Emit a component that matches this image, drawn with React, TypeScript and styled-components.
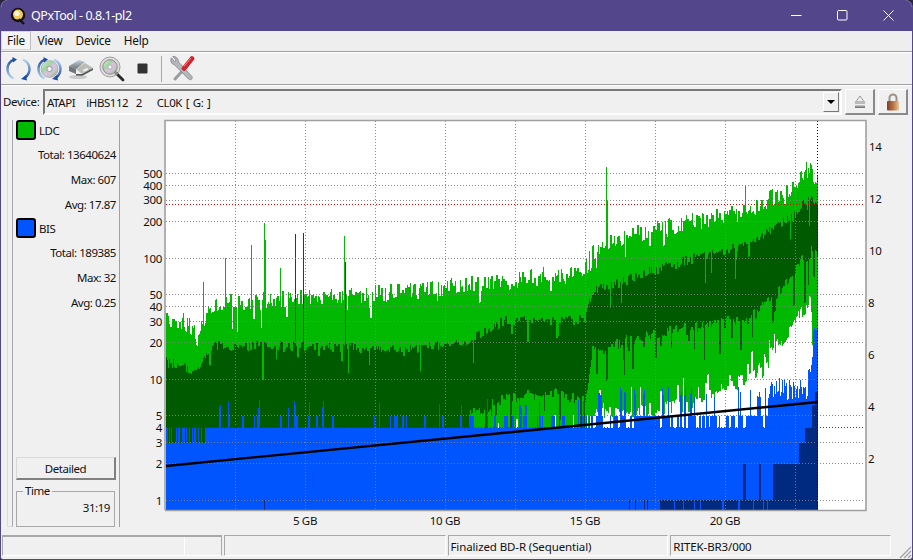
import React from "react";
import styled, { createGlobalStyle } from "styled-components";

const Global = createGlobalStyle`
  html, body { margin: 0; padding: 0; background: #2a2540; }
  #root { width: 913px; height: 560px; }
  * { box-sizing: border-box; }
`;
const Win = styled.div`
  width: 913px; height: 560px; overflow: hidden; display: flex; flex-direction: column;
  background: #f0f0f0; border-radius: 8px 8px 3px 3px; border: 1px solid #54468a; border-top: 0;
  font-family: "Noto Sans", "Open Sans", sans-serif; font-size: 11.5px; letter-spacing: -0.45px; color: #111;
`;
const TitleBar = styled.div`
  height: 31px; flex: none; background: #54468a; color: #fff; display: flex; align-items: center;
  margin: 0 -1px; padding: 0 2px 0 10px; font-size: 12.5px;
`;
const TitleText = styled.span` margin-left: 5px; flex: 1; `;
const Caption = styled.div` width: 46px; height: 31px; display: flex; align-items: center; justify-content: center; `;
const MenuBar = styled.div`
  height: 21px; flex: none; display: flex; background: #eeeeee; align-items: flex-start;
  border-bottom: 1px solid #a0a0a0;
`;
const MenuItem = styled.div<{ $on?: boolean }>`
  height: 19px; padding: 0 6.5px; line-height: 19px; font-size: 11.8px; letter-spacing: -0.2px;
  ${p => p.$on ? "border: 1px solid #d8d8d8; border-right-color:#bdbdbd; line-height:17px; padding:0 5px; background:#f4f4f4;" : ""}
`;
const ToolBar = styled.div`
  height: 33px; flex: none; display: flex; align-items: center; padding-left: 2px; border-top: 1px solid #fff;
  border-bottom: 1px solid #a0a0a0; background: #f0f0f0;
`;
const ToolButton = styled.div` width: 31px; height: 30px; display: flex; align-items: center; justify-content: center; `;
const ToolSep = styled.div` width: 1px; height: 26px; background: #a8a8a8; margin: 0 4px 0 3px; `;
const DeviceRow = styled.div`
  height: 33px; flex: none; display: flex; align-items: flex-start; padding: 3px 4px 0 2px; border-top: 1px solid #fff;
`;
const DeviceLabel = styled.div` width: 40px; height: 26px; line-height: 26px; font-size: 11.5px; letter-spacing: -0.3px; `;
const Combo = styled.div`
  flex: 1; height: 26px; display: flex; align-items: center; justify-content: space-between; padding: 0 1px 0 2px;
  border: 2px solid #fff; border-top-color: #7a7a7a; border-left-color: #7a7a7a; background: #f0f0f0;
`;
const ComboText = styled.span` white-space: pre; font-size: 11.5px; word-spacing: 1.2px; `;
const ComboArrow = styled.div`
  width: 16px; height: 20px; border: 1px solid #fff; border-right-color: #777; border-bottom-color: #777;
  display: flex; align-items: center; justify-content: center;
  &::after { content: ""; border: 4px solid transparent; border-top: 4px solid #000; border-bottom: 0; }
`;
const SquareBtn = styled.div`
  width: 30px; height: 26px; margin-left: 3px; border: 1px solid #fff; border-right: 2px solid #8a8a8a; border-bottom: 2px solid #8a8a8a;
  display: flex; align-items: center; justify-content: center; &:first-of-type { margin-left: 4px; }
`;
const Main = styled.div` flex: 1; display: flex; min-height: 0; padding-left: 6px; `;
const Splitter = styled.div`
  width: 6px; margin-top: 2px; height: 407px; border-left: 1px solid #dcdcdc; border-bottom: 1px solid #dcdcdc; border-right: 1px solid #a8a8a8; flex: none;
`;
const Side = styled.div`
  width: 107px; margin-top: 2px; height: 407px; flex: none; display: flex; flex-direction: column;
  border-right: 1px solid #a0a0a0; padding: 0 3px 0 3px;
`;
const LegendHead = styled.div` height: 20px; display: flex; align-items: center; gap: 3px; margin-bottom: 2px; `;
const Swatch = styled.div<{ $c: string }>` width: 20px; height: 20px; border-radius: 3px; border: 2px solid #000; background: ${p => p.$c}; `;
const Stat = styled.div` height: 25px; line-height: 25px; text-align: right; font-size: 11.5px; white-space: nowrap; `;
const Gap = styled.div` height: 1px; `;
const Detailed = styled.div`
  margin-top: auto; height: 23px; width: 100px; line-height: 22px; text-align: center;
  border: 1px solid #d8d8d8; border-right: 2px solid #808080; border-bottom: 2px solid #808080; background: #f0f0f0;
`;
const TimeBox = styled.fieldset`
  margin: 4px 0 0; padding: 0 4px 0 0; height: 43px; width: 99px; border: 1px solid #a8a8a8;
`;
const TimeLegend = styled.legend` margin-left: 6px; padding: 0 2px; line-height: 14px; font-size: 11.5px; `;
const TimeValue = styled.div` text-align: right; line-height: 20px; `;
const ChartSvg = styled.svg` display: block; flex: none; font-family: "Noto Sans", sans-serif; font-size: 11.5px; letter-spacing: -0.3px; `;
const StatusBar = styled.div` height: 27px; flex: none; display: flex; padding: 3px 19px 3px 1px; position: relative; `;
const Panel = styled.div<{ $w: number }>`
  width: ${p => p.$w}px; height: 21px; margin-right: 2px; padding-left: 2px; line-height: 21px; font-size: 11.5px; letter-spacing: -0.12px;
  border: 1px solid #fff; border-top: 1px solid #a8a8a8; border-left: 1px solid #a8a8a8; white-space: nowrap;
`;
const FirstPanel = styled(Panel)`
  border-top: 2px solid #a8a8a8; border-right: 1px solid #a8a8a8; box-shadow: inset -36px 0 0 #f0f0f0, inset -37px 0 0 #fff;
`;
const Grip = styled.svg` position: absolute; right: 0; bottom: 0; `;

function rng(seed: number) { let s = seed; return () => { s = (s * 1664525 + 1013904223) >>> 0; return s / 4294967296; }; }
function lerp(t: number[][], x: number) {
  for (let i = 1; i < t.length; i++) if (x <= t[i][0]) {
    const [a, b] = t[i - 1], [c, d] = t[i]; return b + (d - b) * (x - a) / (c - a);
  }
  return t[t.length - 1][1];
}
const topT = [[166,322],[180,320],[190,327],[197,338],[205,316],[220,304],[300,298],[400,292],[500,282],[585,270],[592,252],[620,238],[700,220],[750,208],[795,185],[808,168],[818,184]];
const darkTopT = [[166,362],[185,368],[196,374],[206,352],[216,346],[300,346],[400,350],[465,342],[505,320],[585,320],[592,292],[650,272],[700,256],[750,244],[795,215],[808,197],[818,210]];
const darkBotT = [[470,415],[500,400],[550,392],[585,402],[592,352],[620,342],[700,326],[750,318],[777,293],[800,262],[812,250],[818,255]];
const lightBotT = [[470,445],[585,440],[592,415],[690,405],[750,375],[790,330],[803,310],[808,302],[812,306],[818,330]];
const spikes: Record<number, [number, boolean]> = { 203:[282,false],225:[258,false],251:[245,false],264:[223,false],265:[240,false],280:[268,false],295:[234,true],303:[233,true],344:[236,false],345:[262,true],606:[167,false],607:[200,false],745:[186,false],725:[215,false],790:[196,false],797:[188,false] };

function buildData() {
  const r = rng(987654);
  const c: Record<string, string> = { light: "", dark: "", blue: "", navy: "", white: "" };
  const add = (k: string, x: number, a: number, b: number) => { if (b > a) c[k] += `M${x + 0.5} ${Math.round(a)}V${Math.round(b)}`; };
  const held = (fn: () => number) => { let left = 0, v = 0; return () => { if (left-- <= 0) { v = fn(); left = Math.floor(r() * 2); } return v; }; };
  const nTop = held(() => (r() - 0.5) * 18 + (r() < 0.1 ? r() * 22 : 0));
  const nDark = held(() => (r() - 0.5) * 10 + (r() < 0.08 ? r() * 30 : 0));
  const nBot = held(() => (r() - 0.5) * 12 + (r() < 0.22 ? r() * 42 : 0));
  const nLight = held(() => (r() - 0.5) * 14 - (r() < 0.18 ? r() * 30 : 0) + (r() < 0.08 ? r() * 25 : 0));
  const nMix = held(() => r());
  const nBlue = held(() => r());
  for (let x = 166; x < 818; x++) {
    let top = lerp(topT, x) + nTop();
    const sp = spikes[x];
    if (sp && !sp[1]) top = sp[0];
    const dTop = lerp(darkTopT, x) + nDark();
    const dark2 = lerp(darkBotT, x) + nBot();
    const lightB = x >= 812 ? 345 : lerp(lightBotT, x) + nLight();
    let bTop = x < 205 ? 443 : 428;
    if (x < 205 && nBlue() < 0.45) bTop = 428;
    const q = nBlue();
    if (x >= 205 && x < 590) { if (q < 0.2) bTop = 416; if (q < 0.05) bTop = 408 - r() * 10; }
    if (x >= 590) { if (q < 0.6) bTop = 416; if (q < 0.12) bTop = 398 - r() * 12; }
    if (x >= 770) bTop = 400 - r() * 22;
    if (x >= 808) bTop = 375 - r() * 20;
    if (x >= 813) bTop = 322 + r() * 10;

    add("light", x, top, x < 470 ? 445 : lightB);
    add("dark", x, dTop, x < 470 ? 445 : dark2);
    if (sp && sp[1]) add("dark", x, sp[0], dTop);
    if (x < 470) {
      const m = nMix();
      if (m < 0.3) add("light", x, 416, 445);
      if (m < 0.06) add("light", x, 404, 416);
    } else if (x < 590) {
      if (nMix() < 0.3) add("white", x, lightB, 428);
    }
    add("blue", x, bTop, 511);
    if (x < 222 && r() < 0.35) add(r() < 0.6 ? "light" : "dark", x, 428, 455 + r() * 9);
    if (x >= 222 && x < 470 && r() < 0.04) add("light", x, 428, 440);
    if (x >= 590 && x < 760 && r() < 0.25) add("white", x, 416, 428);
    if (x === 669) add("white", x, 428, 443);
    let n = 511;
    if (x === 264) n = 500;
    if (x >= 628 && x < 655 && r() < 0.18) n = 500;
    if (x >= 660 && r() < 0.9) n = 500;
    if ((x >= 743 && x < 746) || (x >= 759 && x < 761) || x >= 773) n = 464;
    if (x >= 799 && x < 805) n = 443;
    if (x >= 805) n = 428;
    if (x >= 812) n = 405;
    if (x >= 815) n = 392;
    add("navy", x, n, 511);
  }
  return c;
}
const data = buildData();
const H = [173,185,200,221,258,294,306,321,342,379,415,442,463,500];
const LEFT: [string, number][] = [["500",174],["400",186],["300",200],["200",222],["100",259],["50",295],["40",307],["30",322],["20",343],["10",380],["5",416],["4",428],["3",443],["2",464],["1",501]];
const RIGHT: [string, number][] = [["14",147],["12",199],["10",251],["8",303],["6",355],["4",407],["2",459]];
const V = [235,305,375,445,515,585,655,725,795];

const Chart = () => (
  <ChartSvg width={787} height={415} viewBox="120 118 787 415">
    <rect x={165.5} y={121} width={700} height={389} fill="#fff" />
    <path d={data.light} stroke="#00b900" strokeWidth={1} fill="none" shapeRendering="crispEdges" />
    <path d={data.dark} stroke="#005a00" strokeWidth={1} fill="none" shapeRendering="crispEdges" />
    <path d={data.white} stroke="#fff" strokeWidth={1} fill="none" shapeRendering="crispEdges" />
    <path d={data.blue} stroke="#0055ff" strokeWidth={1} fill="none" shapeRendering="crispEdges" />
    <path d={data.navy} stroke="#002a80" strokeWidth={1} fill="none" shapeRendering="crispEdges" />
    {H.map(y => <line key={y} x1={166} x2={865} y1={y + 0.5} y2={y + 0.5} stroke="#808080" strokeOpacity={0.9} strokeDasharray="1 2" shapeRendering="crispEdges" />)}
    {V.map(x => <line key={x} x1={x + 0.5} x2={x + 0.5} y1={121} y2={510} stroke="#808080" strokeOpacity={0.9} strokeDasharray="1 2" shapeRendering="crispEdges" />)}
    <line x1={166} x2={865} y1={204.5} y2={204.5} stroke="#e00000" strokeDasharray="1 2" shapeRendering="crispEdges" />
    <line x1={166} x2={865} y1={427.5} y2={427.5} stroke="#e00000" strokeDasharray="1 2" shapeRendering="crispEdges" />
    <line x1={817.5} x2={817.5} y1={121} y2={510} stroke="#000" strokeDasharray="1 2" shapeRendering="crispEdges" />
    <line x1={166} x2={818} y1={466} y2={402} stroke="#000" strokeWidth={2.4} />
    <path d="M165 510V120.5H866V510.5H165" fill="none" stroke="#a0a0a0" strokeWidth={1.6} />
    {LEFT.map(([t, y]) => <text key={t} x={162} y={y + 4} textAnchor="end" fill="#111">{t}</text>)}
    {RIGHT.map(([t, y]) => <text key={t} x={t.length > 1 ? 869 : 868} y={y + 4} fill="#111">{t}</text>)}
    {[["5 GB",305],["10 GB",445],["15 GB",585],["20 GB",725]].map(([t, x]) => <text key={t as string} x={x as number} y={525} textAnchor="middle" fill="#111">{t}</text>)}
  </ChartSvg>
);

const Defs = () => (
  <svg width={0} height={0} style={{ position: "absolute" }}>
    <defs>
      <linearGradient id="up" x1="0" y1="0" x2="0" y2="1"><stop offset="0" stopColor="#1d4f9e" /><stop offset="1" stopColor="#b4d4f2" /></linearGradient>
      <linearGradient id="dn" x1="0" y1="0" x2="0" y2="1"><stop offset="0" stopColor="#b4d4f2" /><stop offset="1" stopColor="#1d4f9e" /></linearGradient>
      <linearGradient id="cd" x1="0" y1="0" x2="1" y2="1"><stop offset="0" stopColor="#e8e8e8" /><stop offset="0.35" stopColor="#9fd6a0" /><stop offset="0.5" stopColor="#d9c0e0" /><stop offset="0.7" stopColor="#c8c8c8" /><stop offset="1" stopColor="#8f8f8f" /></linearGradient>
      <linearGradient id="drv" x1="0" y1="0" x2="0" y2="1"><stop offset="0" stopColor="#c6d0d8" /><stop offset="1" stopColor="#6c7278" /></linearGradient>
      <linearGradient id="lock" x1="0" y1="0" x2="1" y2="0"><stop offset="0" stopColor="#8a3a20" /><stop offset="0.55" stopColor="#b87a4a" /><stop offset="1" stopColor="#e8c89a" /></linearGradient>
      <linearGradient id="ej" x1="0" y1="0" x2="0" y2="1"><stop offset="0" stopColor="#d0d0d0" /><stop offset="1" stopColor="#666" /></linearGradient>
    </defs>
  </svg>
);
const Arcs = () => (<>
  <path d="M8 3.5C3.5 5.5 1.5 9 1.5 13s2 7.5 6 9.5" fill="none" stroke="url(#up)" strokeWidth="2.4" />
  <path d="M6.5 1L11 3.5 7 6.5z" fill="#1d4f9e" />
  <path d="M17 3.5c4 2 6.5 5.5 6.5 9.5 0 3.5-1.6 6.5-4.5 8.5" fill="none" stroke="url(#dn)" strokeWidth="2.4" />
  <path d="M20 19l-5 4 6 1.5z" fill="#1d4f9e" />
</>);
const IconReload = () => <svg width={25} height={26} viewBox="0 0 25 26"><Arcs /></svg>;
const IconCd = () => (
  <svg width={25} height={26} viewBox="0 0 25 26">
    <circle cx="12.5" cy="13" r="8.5" fill="url(#cd)" stroke="#9a9a9a" strokeWidth=".6" />
    <circle cx="12.5" cy="13" r="2.6" fill="#f4f4f4" stroke="#888" strokeWidth=".8" />
    <Arcs />
  </svg>
);
const IconDrive = () => (
  <svg width={26} height={22} viewBox="0 0 26 22">
    <path d="M1 8L11 2l6 2-9 7z" fill="url(#drv)" />
    <path d="M1 8l7 3v5L1 13z" fill="#70767c" />
    <path d="M8 11l9-6 8 5-11 6z" fill="#b9bcb5" />
    <path d="M8 16l6 0 11-6v2L14 18H8z" fill="#55595d" />
    <ellipse cx="10" cy="19" rx="9" ry="2" fill="#aaa" opacity=".55" />
    <rect x="15" y="11" width="5" height="2" fill="#efefef" transform="rotate(-25 17 12)" />
  </svg>
);
const IconSearch = () => (
  <svg width={26} height={26} viewBox="0 0 26 26">
    <circle cx="11" cy="11" r="10" fill="#dcdcdc" stroke="#a0a0a0" />
    <circle cx="11" cy="11" r="7.2" fill="url(#cd)" stroke="#8d8d8d" />
    <circle cx="11" cy="11" r="2" fill="#f6f6f6" stroke="#999" strokeWidth=".6" />
    <path d="M17 17l7 7" stroke="#2a2a2a" strokeWidth="2.8" strokeLinecap="round" />
    <path d="M16 16l2.5 2.5" stroke="#999" strokeWidth="2.2" />
  </svg>
);
const IconStop = () => <svg width={11} height={11} viewBox="0 0 11 11"><rect x=".5" y=".5" width="10" height="10" rx="1" fill="#333" /></svg>;
const IconTools = () => (
  <svg width={26} height={27} viewBox="0 0 26 27">
    <path d="M6 24l12-13" stroke="#9a9da0" strokeWidth="3" strokeLinecap="round" />
    <path d="M2.5 2.8C1 5.5 2 9 5.5 9.8L19.5 24c1.8 1.8 4.6 0 3.5-2.4L9.6 7C9.5 3.8 7 1 3.8 1.5L7 5 5.6 6.8z" fill="#b4b8bb" stroke="#74787b" strokeWidth=".7" />
    <path d="M15 13.5l8-10" stroke="#d2232a" strokeWidth="4.6" strokeLinecap="round" />
    <path d="M15 11.5l7-8.5" stroke="#f58a8a" strokeWidth="1" />
  </svg>
);
const Logo = () => (
  <svg width={16} height={18} viewBox="0 0 16 18">
    <circle cx="8" cy="8" r="7.2" fill="#111" />
    <circle cx="8" cy="7.6" r="5" fill="#f3c95c" />
    <circle cx="7" cy="6.5" r="2.6" fill="#fff5d8" />
    <path d="M9 12l5 5" stroke="#111" strokeWidth="2.4" />
  </svg>
);
const Eject = () => (
  <svg width={14} height={14} viewBox="0 0 14 14">
    <path d="M7 1L12 8H2z" fill="none" stroke="#999" />
    <rect x="2" y="6" width="10" height="3" fill="#bbb" />
    <rect x="2" y="10" width="10" height="3" fill="url(#ej)" />
  </svg>
);
const Lock = () => (
  <svg width={14} height={18} viewBox="0 0 14 18">
    <path d="M3.5 8V5a3.5 3.5 0 017 0v3" fill="none" stroke="#9a9086" strokeWidth="2" />
    <rect x="1" y="8" width="12" height="9.5" rx="1" fill="url(#lock)" />
  </svg>
);

export default function App() {
  return (
    <Win>
      <Global />
      <Defs />
      <TitleBar>
        <Logo />
        <TitleText>QPxTool - 0.8.1-pl2</TitleText>
        <Caption><svg width={11} height={11}><path d="M0 5.5h10.5" stroke="#fff" /></svg></Caption>
        <Caption><svg width={11} height={11}><rect x=".5" y=".5" width="9.5" height="9.5" rx="1" fill="none" stroke="#fff" /></svg></Caption>
        <Caption><svg width={11} height={11}><path d="M.5.5l10 10M10.5.5l-10 10" stroke="#fff" /></svg></Caption>
      </TitleBar>
      <MenuBar>
        <MenuItem $on>File</MenuItem><MenuItem>View</MenuItem><MenuItem>Device</MenuItem><MenuItem>Help</MenuItem>
      </MenuBar>
      <ToolBar>
        <ToolButton><IconReload /></ToolButton>
        <ToolButton><IconCd /></ToolButton>
        <ToolButton><IconDrive /></ToolButton>
        <ToolButton><IconSearch /></ToolButton>
        <ToolButton><IconStop /></ToolButton>
        <ToolSep />
        <ToolButton><IconTools /></ToolButton>
      </ToolBar>
      <DeviceRow>
        <DeviceLabel>Device:</DeviceLabel>
        <Combo><ComboText>{"ATAPI   iHBS112  2    CL0K [ G: ]"}</ComboText><ComboArrow /></Combo>
        <SquareBtn><Eject /></SquareBtn>
        <SquareBtn><Lock /></SquareBtn>
      </DeviceRow>
      <Main>
        <Splitter />
        <Side>
          <LegendHead><Swatch $c="#00bb00" /><span>LDC</span></LegendHead>
          <Stat>Total: 13640624</Stat><Stat>Max: 607</Stat><Stat>Avg: 17.87</Stat>
          <Gap />
          <LegendHead><Swatch $c="#0055ff" /><span>BIS</span></LegendHead>
          <Stat>Total: 189385</Stat><Stat>Max: 32</Stat><Stat>Avg: 0.25</Stat>
          <Detailed>Detailed</Detailed>
          <TimeBox><TimeLegend>Time</TimeLegend><TimeValue>31:19</TimeValue></TimeBox>
        </Side>
        <Chart />
      </Main>
      <StatusBar>
        <FirstPanel $w={220} />
        <Panel $w={222} />
        <Panel $w={221}>Finalized BD-R (Sequential)</Panel>
        <Panel $w={221}>RITEK-BR3/000</Panel>
        <Grip width={16} height={16} viewBox="0 0 16 16"><path d="M15 4L4 15M15 8l-7 7M15 12l-3 3" stroke="#a0a0a0" strokeWidth="1.2" /></Grip>
      </StatusBar>
    </Win>
  );
}
